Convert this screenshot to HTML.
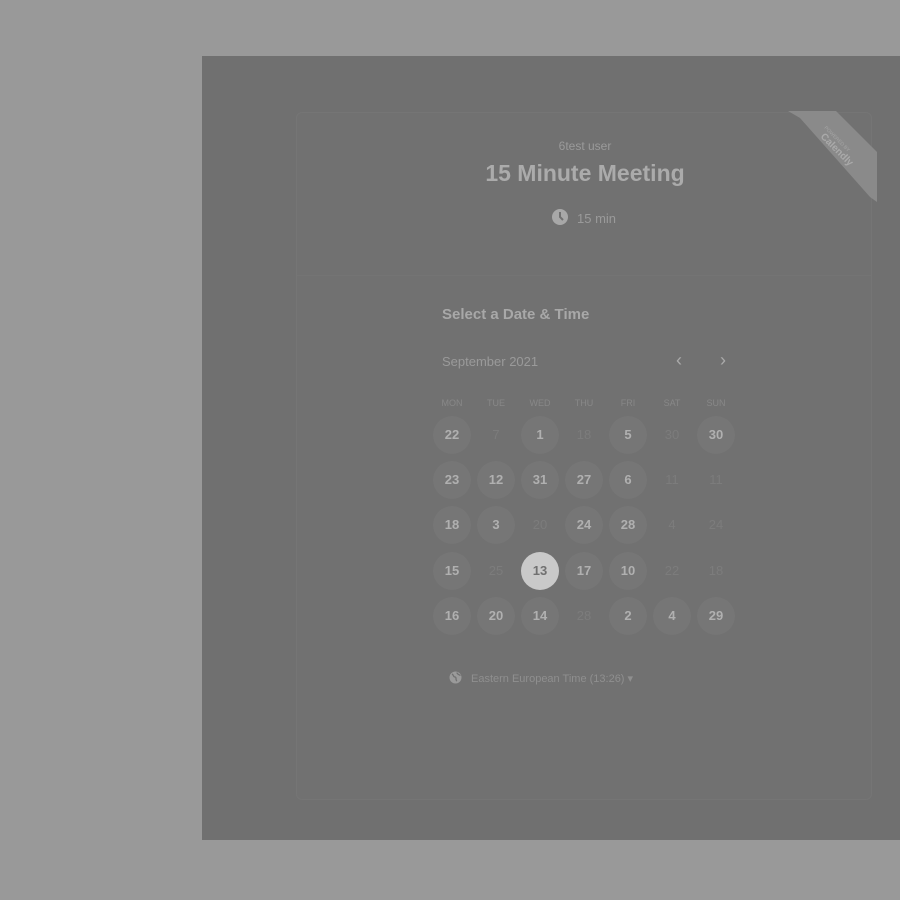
<!DOCTYPE html>
<html><head><meta charset="utf-8"><style>
body{margin:0;width:900px;height:900px;background:#999;position:relative;overflow:hidden;font-family:"Liberation Sans",sans-serif}
#panel{position:absolute;left:202px;top:56px;width:698px;height:784px;background:#707070}
#card{position:absolute;left:296px;top:112px;width:576px;height:688px;background:#717171;border:1px solid #757575;border-radius:6px;box-sizing:border-box}
.t{position:absolute;color:#aaa;white-space:nowrap}
.c{position:absolute;width:38px;height:38px;margin:-19px 0 0 -19px;border-radius:50%;text-align:center;line-height:38px;font-size:13px;color:#b0b0b0;font-weight:bold}
.c.a{background:#767676}
.c.d{font-weight:normal;color:#7c7c7c}
.c.s{background:#c9c9c9;color:#707070}
.h{position:absolute;width:44px;margin-left:-22px;text-align:center;font-size:9px;color:#888;top:398px}
</style></head><body>
<div id="panel"></div>
<div id="card"></div>
<div style="position:absolute;left:297px;top:275px;width:574px;height:1px;background:#747474"></div>
<svg style="position:absolute;left:786px;top:110px" width="92" height="94"><polygon points="2,1 50,1 91,42 91,92 84,87 14,8" fill="#8a8a8a"/><text transform="translate(38,18) rotate(45)" font-size="5" fill="#a5a5a5" font-family="Liberation Sans">POWERED BY</text><text transform="translate(34,27) rotate(45)" font-size="10" font-weight="bold" fill="#aaa" font-family="Liberation Sans">Calendly</text></svg>
<div class="t" style="left:0;width:1170px;text-align:center;top:139px;font-size:12px;color:#9a9a9a">6test user</div>
<div class="t" style="left:0;width:1170px;text-align:center;top:160px;font-size:23px;font-weight:bold;color:#ababab">15 Minute Meeting</div>
<svg style="position:absolute;left:552px;top:209px" width="16" height="16"><circle cx="8" cy="8" r="8" fill="#a8a8a8"/><path d="M8 3v5l3 3" stroke="#707070" stroke-width="2" fill="none"/></svg>
<div class="t" style="left:577px;top:211px;font-size:13px;color:#9a9a9a">15 min</div>
<div class="t" style="left:442px;top:306px;font-size:15px;font-weight:bold;color:#a8a8a8">Select a Date &amp; Time</div>
<div class="t" style="left:442px;top:354px;font-size:13px;color:#9a9a9a">September 2021</div>
<div class="t" style="left:676px;top:350px;font-size:18px;color:#aaa">‹</div>
<div class="t" style="left:720px;top:350px;font-size:18px;color:#aaa">›</div>
<div class="h" style="left:452px">MON</div><div class="h" style="left:496px">TUE</div><div class="h" style="left:540px">WED</div><div class="h" style="left:584px">THU</div><div class="h" style="left:628px">FRI</div><div class="h" style="left:672px">SAT</div><div class="h" style="left:716px">SUN</div>
<div id="g"></div>
<script>
var rows=[["22a","7d","1a","18d","5a","30d","30a"],["23a","12a","31a","27a","6a","11d","11d"],["18a","3a","20d","24a","28a","4d","24d"],["15a","25d","13s","17a","10a","22d","18d"],["16a","20a","14a","28d","2a","4a","29a"]];
var ys=[435,480,525,571,616],h="";
rows.forEach(function(r,i){r.forEach(function(v,j){var k=v.slice(-1),n=v.slice(0,-1);h+='<div class="c '+k+'" style="left:'+(452+44*j)+'px;top:'+ys[i]+'px">'+n+'</div>';});});
document.getElementById("g").innerHTML=h;
</script>
<svg style="position:absolute;left:449px;top:671px" width="13" height="13"><circle cx="6.5" cy="6.5" r="6" fill="#9a9a9a"/><path d="M3 3c2 1 1 3 3 3s0 3 2 4M8 1.5c0 2 2 2 3.5 3" stroke="#707070" stroke-width="1.3" fill="none"/></svg>
<div class="t" style="left:471px;top:672px;font-size:11px;color:#8f8f8f">Eastern European Time (13:26) ▾</div>
</body></html>
